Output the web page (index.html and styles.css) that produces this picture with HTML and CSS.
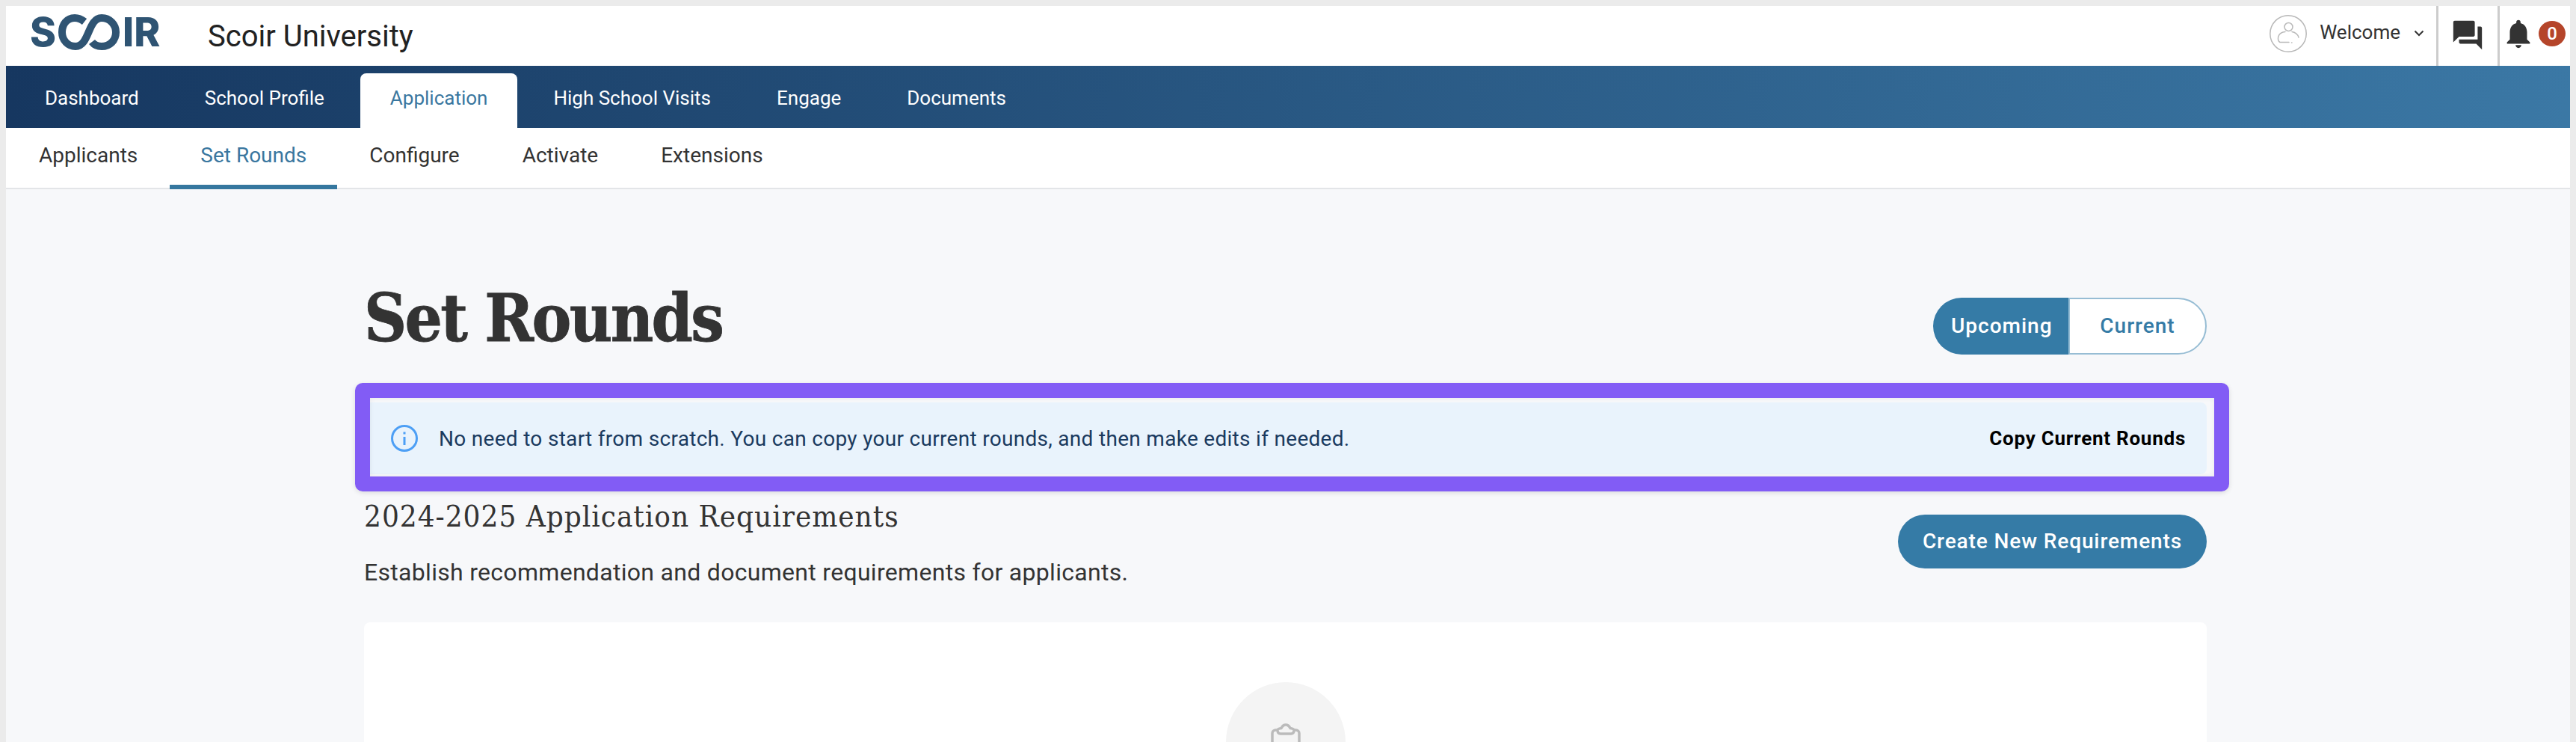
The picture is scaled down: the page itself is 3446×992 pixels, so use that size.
FILE: index.html
```html
<!DOCTYPE html>
<html lang="en">
<head>
<meta charset="utf-8">
<title>Set Rounds</title>
<link rel="stylesheet" href="styles.css">
</head>
<body>
<div class="app">
  <header class="topbar">
    <div class="logo">
      <span class="logo-s">S</span>
      <svg class="logo-loop" viewBox="0 0 82 48" aria-hidden="true"><path d="M35 10C30 6 26 5 22 5C11 5 5 14 5 24C5 35 13 43 23 43C42 43 39 5 58 5C69 5 77 14 77 24C77 35 69 43 58 43C52 43 48 41 45 37"/></svg>
      <span class="logo-ir">IR</span>
    </div>
    <div class="school-name">Scoir University</div>
    <div class="top-actions">
      <svg class="avatar" viewBox="0 0 50 50" aria-hidden="true"><circle cx="25" cy="25" r="24.2"/><circle cx="25.5" cy="16" r="5.5"/><path d="M39 30c-1-4-5-7-9-7.500M21 22.500c-5 .5-8 3-9 6-1 3-.5 7 2 8h12M29.500 37h.5"/></svg>
      <span class="welcome">Welcome</span>
      <svg class="chevron" viewBox="0 0 14 9" aria-hidden="true"><path d="M1.500 1.500 7 7l5.500-5.500"/></svg>
      <div class="icon-cell chat-cell">
        <svg class="top-icon" viewBox="0 0 24 24" aria-hidden="true"><path d="M21 6h-2v9H6v2c0 .55.45 1 1 1h11l4 4V7c0-.55-.45-1-1-1zm-4 6V3c0-.55-.45-1-1-1H3c-.55 0-1 .45-1 1v14l4-4h10c.55 0 1-.45 1-1z"/></svg>
      </div>
      <div class="icon-cell bell-cell">
        <svg class="top-icon" viewBox="0 0 24 24" aria-hidden="true"><path d="M12 22c1.100 0 2-.9 2-2h-4c0 1.100.89 2 2 2zm6-6v-5c0-3.070-1.640-5.640-4.500-6.320V4c0-.83-.67-1.500-1.500-1.500s-1.500.67-1.500 1.500v.68C7.630 5.360 6 7.920 6 11v5l-2 2v1h16v-1l-2-2z"/></svg>
        <span class="badge">0</span>
      </div>
    </div>
  </header>

  <nav class="mainnav">
    <a class="tab">Dashboard</a>
    <a class="tab">School Profile</a>
    <a class="tab tab-active">Application</a>
    <a class="tab">High School Visits</a>
    <a class="tab">Engage</a>
    <a class="tab">Documents</a>
  </nav>

  <nav class="subnav">
    <a class="subtab">Applicants</a>
    <a class="subtab subtab-active">Set Rounds</a>
    <a class="subtab">Configure</a>
    <a class="subtab">Activate</a>
    <a class="subtab">Extensions</a>
  </nav>

  <main class="content">
    <div class="title-row">
      <h1 class="page-title">Set Rounds</h1>
      <div class="toggle">
        <span class="toggle-on">Upcoming</span>
        <span class="toggle-off">Current</span>
      </div>
    </div>

    <div class="alert">
      <svg class="info" viewBox="0 0 36 36" aria-hidden="true"><circle cx="18" cy="18" r="16.500"/><path d="M18 16v11M18 9.500v3"/></svg>
      <span class="alert-text">No need to start from scratch. You can copy your current rounds, and then make edits if needed.</span>
      <span class="alert-action">Copy Current Rounds</span>
      <span class="highlight"></span>
    </div>

    <div class="section-row">
      <div>
        <h2 class="section-title">2024-2025 Application Requirements</h2>
        <p class="section-desc">Establish recommendation and document requirements for applicants.</p>
      </div>
      <span class="create-btn">Create New Requirements</span>
    </div>

    <section class="card">
      <div class="empty-circle">
        <svg class="clipboard" viewBox="0 0 40 46" aria-hidden="true"><path d="M9 9H6.500C4 9 2 11 2 13.500V42c0 1.500 1 2.500 2.500 2.500h31c1.500 0 2.500-1 2.500-2.500V13.500C38 11 36 9 33.500 9H31M9 9c0 3 1.500 5 4 5h14c2.500 0 4-2 4-5 0-1.500-2.500-2-5-2.500C24.500 3.500 22.500 2 20 2s-4.500 1.500-6 4.500C11.500 7 9 7.500 9 9z"/></svg>
      </div>
    </section>
  </main>
</div>
</body>
</html>
```

FILE: styles.css
```css
* { box-sizing: border-box; }
html, body { margin: 0; height: 100%; }
body {
  background: #ebebeb;
  font-family: Roboto, "Liberation Sans", sans-serif;
  color: #333;
  overflow: hidden;
}
.app {
  margin: 8px 8px 0;
  height: 984px;
  background: #f7f8fa;
  overflow: hidden;
}

/* top bar */
.topbar {
  height: 80px;
  background: #fff;
  display: flex;
  align-items: center;
  padding-left: 32px;
}
.logo {
  display: flex;
  align-items: center;
  width: 172px;
  height: 40px;
  margin-top: -10px;
  color: #2f5473;
  font-family: Inter, "Liberation Sans", sans-serif;
  font-weight: 800;
  font-size: 53px;
  line-height: 40px;
}
.logo-s { width: 36px; }
.logo-loop {
  width: 82px;
  height: 48px;
  margin-left: 3px;
  flex: none;
  fill: none;
  stroke: #2f5473;
  stroke-width: 10;
}
.logo-ir { margin-left: 4px; letter-spacing: 0; }
.school-name {
  margin-left: 66px;
  font-size: 40px;
  color: #222;
}
.top-actions {
  margin-left: auto;
  height: 80px;
  display: flex;
  align-items: center;
}
.avatar {
  width: 50px;
  height: 50px;
  margin-top: -6px;
  fill: none;
  stroke: #b9b9b9;
  stroke-width: 1.500;
  stroke-linecap: round;
}
.welcome {
  margin-left: 17px;
  font-size: 26px;
  color: #333;
  margin-top: -10px;
}
.chevron {
  width: 14px;
  height: 9px;
  margin-left: 18px;
  margin-top: -8px;
  fill: none;
  stroke: #333;
  stroke-width: 2;
}
.icon-cell {
  height: 80px;
  border-left: 3px solid #ccc;
  display: flex;
  align-items: flex-start;
}
.chat-cell { margin-left: 16px; width: 82px; padding: 16px 0 0 16px; }
.bell-cell { width: 97px; padding: 14px 0 0 2px; }
.top-icon { width: 46px; height: 46px; fill: #333; flex: none; }
.badge {
  width: 36px;
  height: 34px;
  margin: 6px 0 0 4px;
  border-radius: 50%;
  background: #b5452a;
  color: #fff;
  font-size: 24px;
  font-weight: 500;
  line-height: 34px;
  text-align: center;
  flex: none;
}

/* main nav */
.mainnav {
  height: 83px;
  padding: 10px 0 0 12px;
  display: flex;
  gap: 8px;
  background: linear-gradient(90deg, #163760 0%, #3b78a5 100%);
}
.tab {
  padding: 0 40px;
  line-height: 66px;
  font-size: 26px;
  color: #fff;
  border-radius: 8px 8px 0 0;
}
.tab-active { background: #fff; color: #3a779f; }

/* sub nav */
.subnav {
  height: 82px;
  padding-left: 3px;
  display: flex;
  gap: 2px;
  background: #fff;
  border-bottom: 2px solid #e3e5e8;
}
.subtab {
  padding: 0 41px;
  line-height: 74px;
  font-size: 28px;
  color: #333;
  height: 82px;
}
.subtab-active { color: #3a779f; border-bottom: 6px solid #35779f; }

/* content */
.content { padding: 0 486px 0 479px; }
.title-row {
  height: 229px;
  padding-top: 122px;
  display: flex;
  justify-content: space-between;
  align-items: flex-start;
}
.page-title {
  margin: 0;
  font-family: "DejaVu Serif", serif;
  font-stretch: condensed;
  font-weight: 700;
  font-size: 88px;
  line-height: 100px;
  letter-spacing: -2.6px;
  -webkit-text-stroke: .8px #333;
  color: #333;
}
.toggle {
  display: flex;
  width: 366px;
  height: 76px;
  margin-top: 23px;
  font-size: 28px;
  font-weight: 500;
  letter-spacing: 1px;
}
.toggle-on {
  width: 181px;
  background: #357ba6;
  color: #fff;
  border-radius: 38px 0 0 38px;
  line-height: 76px;
  padding-left: 24px;
}
.toggle-off {
  flex: 1;
  background: #fff;
  color: #357ba6;
  border: 2px solid #97bdd4;
  border-radius: 0 38px 38px 0;
  line-height: 72px;
  text-align: center;
}
.alert {
  position: relative;
  height: 96px;
  margin-top: 56px;
  display: flex;
  align-items: center;
  background: #e9f3fc;
  border-radius: 8px;
  padding: 0 28px 0 36px;
}
.info {
  width: 36px;
  height: 36px;
  flex: none;
  fill: none;
  stroke: #4d9ff5;
  stroke-width: 3;
}
.alert-text {
  margin-left: 28px;
  font-size: 28px;
  color: #1a3a5f;
  letter-spacing: .3px;
}
.alert-action {
  margin-left: auto;
  font-size: 26px;
  font-weight: 700;
  color: #000;
  letter-spacing: .75px;
}
.highlight {
  position: absolute;
  top: -26px;
  right: -30px;
  bottom: -23px;
  left: -12px;
  border: 20px solid #825cf5;
  border-radius: 10px;
  box-shadow: 0 2px 6px rgba(0,0,0,.12), inset 0 0 6px rgba(0,0,0,.08);
}
.section-row {
  display: flex;
  justify-content: space-between;
  align-items: flex-start;
  margin-top: 32px;
}
.section-title {
  margin: 0;
  font-family: "DejaVu Serif", serif;
  font-stretch: condensed;
  font-weight: 400;
  font-size: 40px;
  line-height: 48px;
  letter-spacing: 1px;
  color: #333;
}
.section-desc {
  margin: 31px 0 0;
  font-size: 32px;
  line-height: 40px;
  letter-spacing: .3px;
  color: #333;
}
.create-btn {
  margin-top: 22px;
  width: 413px;
  height: 72px;
  border-radius: 36px;
  background: #357ba6;
  color: #fff;
  font-size: 28px;
  font-weight: 500;
  letter-spacing: .9px;
  line-height: 72px;
  text-align: center;
}
.card {
  margin-top: 47px;
  height: 300px;
  background: #fff;
  border-radius: 8px;
  padding-top: 80px;
  display: flex;
  flex-direction: column;
  align-items: center;
}
.empty-circle {
  width: 160px;
  height: 160px;
  border-radius: 50%;
  background: #f4f4f4;
  display: flex;
  justify-content: center;
  padding-top: 55px;
}
.clipboard {
  width: 40px;
  height: 46px;
  fill: none;
  stroke: #bbb;
  stroke-width: 3.500;
}
```
